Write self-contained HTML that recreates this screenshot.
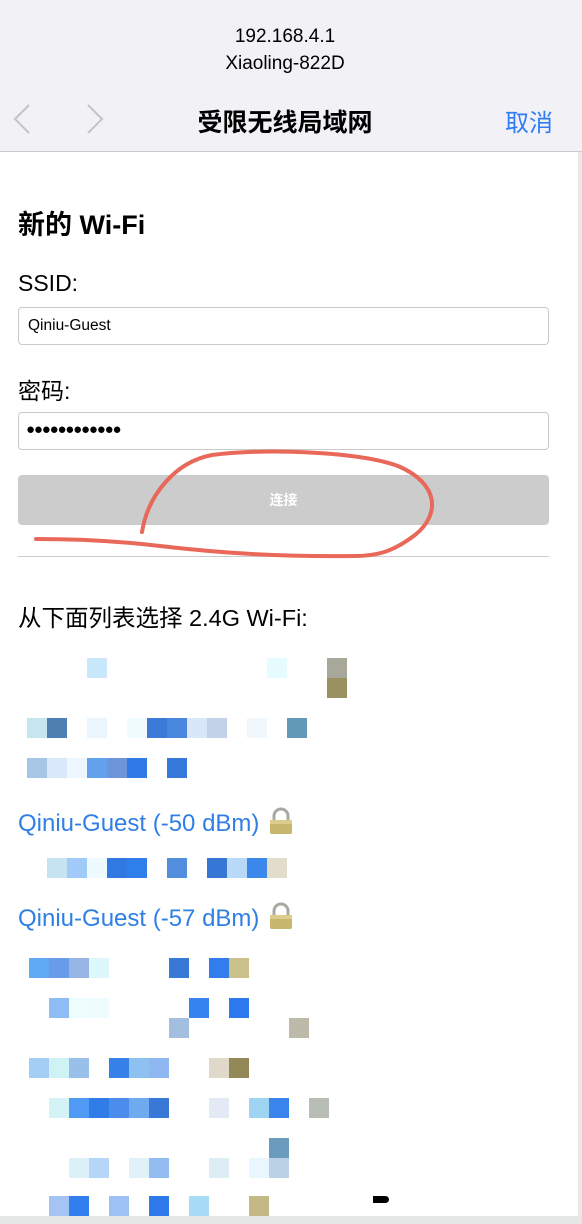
<!DOCTYPE html>
<html><head><meta charset="utf-8"><style>
*{margin:0;padding:0;box-sizing:border-box}
body{width:582px;height:1224px;overflow:hidden;background:#fff;font-family:"Liberation Sans","Noto Sans CJK SC",sans-serif;position:relative;color:#000}
.hd{position:absolute;left:0;top:0;width:582px;height:152px;background:#f1f1f6;border-bottom:1px solid #c8c8cc}
.abs{position:absolute}
.c{left:0;width:570px;text-align:center}
.in{position:absolute;left:18px;width:531px;height:38px;border:1px solid #c9c9c9;border-radius:4px;background:#fff}
.blk{position:absolute;width:20px;height:20px}
.lk{position:absolute;left:18px;font-size:24px;color:#2f7fe6;white-space:nowrap}
.lk svg{vertical-align:-4px;margin-left:9px}
</style></head><body>
<div class="hd">
<div class="abs c" style="top:26px;font-size:19px">192.168.4.1</div>
<div class="abs c" style="top:53px;font-size:19px">Xiaoling-822D</div>
<svg class="abs" style="left:0;top:100px" width="120" height="36"><path d="M29 5 L15 19 L29 33" fill="none" stroke="#c4c4c8" stroke-width="2"/><path d="M88 5 L102 19 L88 33" fill="none" stroke="#c4c4c8" stroke-width="2"/></svg>
<div class="abs c" style="top:103px;font-size:25px;font-weight:bold">受限无线局域网</div>
<div class="abs" style="left:505px;top:103px;font-size:24px;color:#2f7cf6">取消</div>
</div>
<div class="abs" style="right:0;top:152px;width:4px;height:1064px;background:#e9e9ea"></div>
<div class="abs" style="left:18px;top:203px;font-size:27px;font-weight:bold">新的 Wi-Fi</div>
<div class="abs" style="left:18px;top:270px;font-size:23px">SSID:</div>
<div class="in" style="top:307px"><span style="position:absolute;left:9px;top:9px;font-size:15.5px">Qiniu-Guest</span></div>
<div class="abs" style="left:18px;top:372px;font-size:23px">密码:</div>
<div class="in" style="top:412px"><span style="position:absolute;left:7px;top:8px;font-size:15px;letter-spacing:-1.2px">●●●●●●●●●●●●</span></div>
<div class="abs" style="left:18px;top:475px;width:531px;height:50px;background:#cccccc;border-radius:4px;color:#fff;text-align:center;line-height:50px;font-size:14px;font-weight:bold">连接</div>
<div class="abs" style="left:18px;top:556px;width:531px;height:1px;background:#ccc"></div>
<svg class="abs" style="left:0;top:0" width="582" height="600"><path d="M142 532 C148 495 175 462 212 455 C268 448 360 452 398 466 C440 484 440 515 415 535 C395 550 380 556 355 556 C280 557 220 553 160 546 C110 540 70 539 36 539" fill="none" stroke="#e8685a" stroke-width="4" stroke-linecap="round"/></svg>
<div class="abs" style="left:18px;top:599px;font-size:23.5px">从下面列表选择 2.4G Wi-Fi:</div>
<div class="lk" style="top:807px">Qiniu-Guest (-50 dBm)<svg width="26" height="28" viewBox="0 0 26 28"><path d="M6 13 V9 A7 7 0 0 1 20 9 V13" fill="none" stroke="#a9a9a0" stroke-width="3"/><rect x="2" y="13" width="22" height="14" rx="2" fill="#c6b66e"/><rect x="2" y="13" width="22" height="4" fill="#dccd8c"/></svg></div>
<div class="lk" style="top:902px">Qiniu-Guest (-57 dBm)<svg width="26" height="28" viewBox="0 0 26 28"><path d="M6 13 V9 A7 7 0 0 1 20 9 V13" fill="none" stroke="#a9a9a0" stroke-width="3"/><rect x="2" y="13" width="22" height="14" rx="2" fill="#c6b66e"/><rect x="2" y="13" width="22" height="4" fill="#dccd8c"/></svg></div>
<div class="blk" style="left:87px;top:658px;background:#c9e8fb"></div>
<div class="blk" style="left:267px;top:658px;background:#e6fbfd"></div>
<div class="blk" style="left:327px;top:658px;background:#a8a89a"></div>
<div class="blk" style="left:327px;top:678px;background:#9a9160"></div>
<div class="blk" style="left:27px;top:718px;background:#c7e5ee"></div>
<div class="blk" style="left:47px;top:718px;background:#4f7fb1"></div>
<div class="blk" style="left:87px;top:718px;background:#eaf5fe"></div>
<div class="blk" style="left:127px;top:718px;background:#f0fbfe"></div>
<div class="blk" style="left:147px;top:718px;background:#3b7ad6"></div>
<div class="blk" style="left:167px;top:718px;background:#4a88e0"></div>
<div class="blk" style="left:187px;top:718px;background:#d9e7fb"></div>
<div class="blk" style="left:207px;top:718px;background:#c2d2e8"></div>
<div class="blk" style="left:247px;top:718px;background:#f0f8fe"></div>
<div class="blk" style="left:287px;top:718px;background:#6199b7"></div>
<div class="blk" style="left:27px;top:758px;background:#a7c6e6"></div>
<div class="blk" style="left:47px;top:758px;background:#d9e9fb"></div>
<div class="blk" style="left:67px;top:758px;background:#eef7fd"></div>
<div class="blk" style="left:87px;top:758px;background:#62a1eb"></div>
<div class="blk" style="left:107px;top:758px;background:#6c96d9"></div>
<div class="blk" style="left:127px;top:758px;background:#3079e8"></div>
<div class="blk" style="left:167px;top:758px;background:#3479da"></div>
<div class="blk" style="left:47px;top:858px;background:#c5e3f0"></div>
<div class="blk" style="left:67px;top:858px;background:#a0cbf8"></div>
<div class="blk" style="left:87px;top:858px;background:#eefbfe"></div>
<div class="blk" style="left:107px;top:858px;background:#3079e0"></div>
<div class="blk" style="left:127px;top:858px;background:#2e7eec"></div>
<div class="blk" style="left:167px;top:858px;background:#528ede"></div>
<div class="blk" style="left:207px;top:858px;background:#3677d6"></div>
<div class="blk" style="left:227px;top:858px;background:#b8d9f8"></div>
<div class="blk" style="left:247px;top:858px;background:#3b87ec"></div>
<div class="blk" style="left:267px;top:858px;background:#e1dccc"></div>
<div class="blk" style="left:29px;top:958px;background:#60a9f5"></div>
<div class="blk" style="left:49px;top:958px;background:#6a9be8"></div>
<div class="blk" style="left:69px;top:958px;background:#97b6e5"></div>
<div class="blk" style="left:89px;top:958px;background:#ddf8fb"></div>
<div class="blk" style="left:169px;top:958px;background:#3879d8"></div>
<div class="blk" style="left:209px;top:958px;background:#317ded"></div>
<div class="blk" style="left:229px;top:958px;background:#cbc18a"></div>
<div class="blk" style="left:49px;top:998px;background:#8ebdf5"></div>
<div class="blk" style="left:69px;top:998px;background:#eefefe"></div>
<div class="blk" style="left:89px;top:998px;background:#eefcfd"></div>
<div class="blk" style="left:189px;top:998px;background:#3483ee"></div>
<div class="blk" style="left:229px;top:998px;background:#2e78ee"></div>
<div class="blk" style="left:169px;top:1018px;background:#a3bfe0"></div>
<div class="blk" style="left:289px;top:1018px;background:#bdb9ab"></div>
<div class="blk" style="left:29px;top:1058px;background:#a4cef6"></div>
<div class="blk" style="left:49px;top:1058px;background:#cff2f5"></div>
<div class="blk" style="left:69px;top:1058px;background:#99c0ea"></div>
<div class="blk" style="left:109px;top:1058px;background:#3682e8"></div>
<div class="blk" style="left:129px;top:1058px;background:#8fc0f2"></div>
<div class="blk" style="left:149px;top:1058px;background:#8fb7f2"></div>
<div class="blk" style="left:209px;top:1058px;background:#e0d9cb"></div>
<div class="blk" style="left:229px;top:1058px;background:#938858"></div>
<div class="blk" style="left:49px;top:1098px;background:#d5f3f6"></div>
<div class="blk" style="left:69px;top:1098px;background:#519af5"></div>
<div class="blk" style="left:89px;top:1098px;background:#307de8"></div>
<div class="blk" style="left:109px;top:1098px;background:#4a8ded"></div>
<div class="blk" style="left:129px;top:1098px;background:#6eaaf0"></div>
<div class="blk" style="left:149px;top:1098px;background:#3a78d8"></div>
<div class="blk" style="left:209px;top:1098px;background:#e3eaf6"></div>
<div class="blk" style="left:249px;top:1098px;background:#9ed3f2"></div>
<div class="blk" style="left:269px;top:1098px;background:#3a85ec"></div>
<div class="blk" style="left:309px;top:1098px;background:#b8bdb5"></div>
<div class="blk" style="left:269px;top:1138px;background:#6c9cbd"></div>
<div class="blk" style="left:69px;top:1158px;background:#ddf1f9"></div>
<div class="blk" style="left:89px;top:1158px;background:#b5d6f8"></div>
<div class="blk" style="left:129px;top:1158px;background:#e0f1f9"></div>
<div class="blk" style="left:149px;top:1158px;background:#93bdf0"></div>
<div class="blk" style="left:209px;top:1158px;background:#dcedf3"></div>
<div class="blk" style="left:249px;top:1158px;background:#e9f6fd"></div>
<div class="blk" style="left:269px;top:1158px;background:#bbd2e6"></div>
<div class="blk" style="left:49px;top:1196px;background:#a5c4f5"></div>
<div class="blk" style="left:69px;top:1196px;background:#317fee"></div>
<div class="blk" style="left:109px;top:1196px;background:#9dc1f5"></div>
<div class="blk" style="left:149px;top:1196px;background:#3079ea"></div>
<div class="blk" style="left:189px;top:1196px;background:#a6dcf5"></div>
<div class="blk" style="left:249px;top:1196px;background:#c4b884"></div>
<div class="abs" style="left:373px;top:1196px;width:16px;height:7px;background:#000;border-radius:0 4px 4px 0"></div>
<div class="abs" style="left:0;top:1216px;width:582px;height:8px;background:#e5e6e6"></div>
</body></html>
